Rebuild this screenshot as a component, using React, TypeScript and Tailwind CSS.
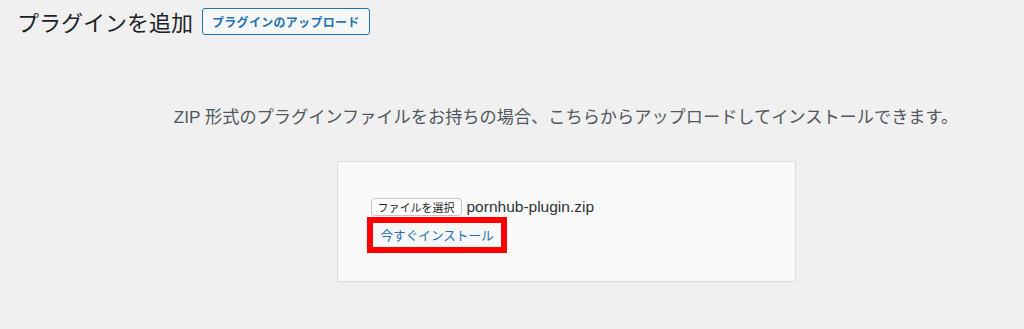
export default function App() {
  const font = "font-['Noto_Sans_CJK_JP','Noto_Sans',sans-serif]";
  return (
    <div className={`w-[1024px] h-[329px] bg-[#f0f0f1] overflow-hidden ${font}`}>
      {/* header */}
      <div className="flex items-center pl-[17px] pt-[8px] h-[35px]">
        <h1 className="text-[22px] leading-[27px] text-[#1d2327] font-normal">プラグインを追加</h1>
        <button className="ml-[9px] h-[27px] px-[9px] border border-[#2271b1] rounded-[3px] bg-[#f6f7f7] text-[#2271b1] text-[12px] tracking-[0.3px] font-bold leading-none">
          プラグインのアップロード
        </button>
      </div>

      <div className="flex flex-col items-center pl-[108px]">
        <p className="mt-[70px] text-[17.2px] leading-[24px] text-[#50575e] font-['Liberation_Sans','Noto_Sans_CJK_JP',sans-serif]">
          ZIP 形式のプラグインファイルをお持ちの場合、こちらからアップロードしてインストールできます。
        </p>

        <div className="mt-[32px] w-[459px] h-[121px] border border-[#dcdcde] bg-[#f9f9f9] pl-[33px] pt-[35px]">
          <div className="flex items-center gap-[5px] h-[19px]">
            <span className="h-[18px] px-[6px] border border-[#c3c4c7] rounded-[4px] bg-white text-[11px] leading-[16px] text-[#1d2327]">
              ファイルを選択
            </span>
            <span className="text-[15.5px] text-[#2c3338] font-['Liberation_Sans',sans-serif]">pornhub-plugin.zip</span>
          </div>
          <div className="mt-[1px] -ml-[4px] w-[140px] h-[36px] border-[6px] border-[#ff0000]">
            <div className="h-full bg-[#f6f7f7] flex items-center pl-[8px] text-[12.6px] text-[#2271b1]">
              今すぐインストール
            </div>
          </div>
        </div>
      </div>
    </div>
  );
}
